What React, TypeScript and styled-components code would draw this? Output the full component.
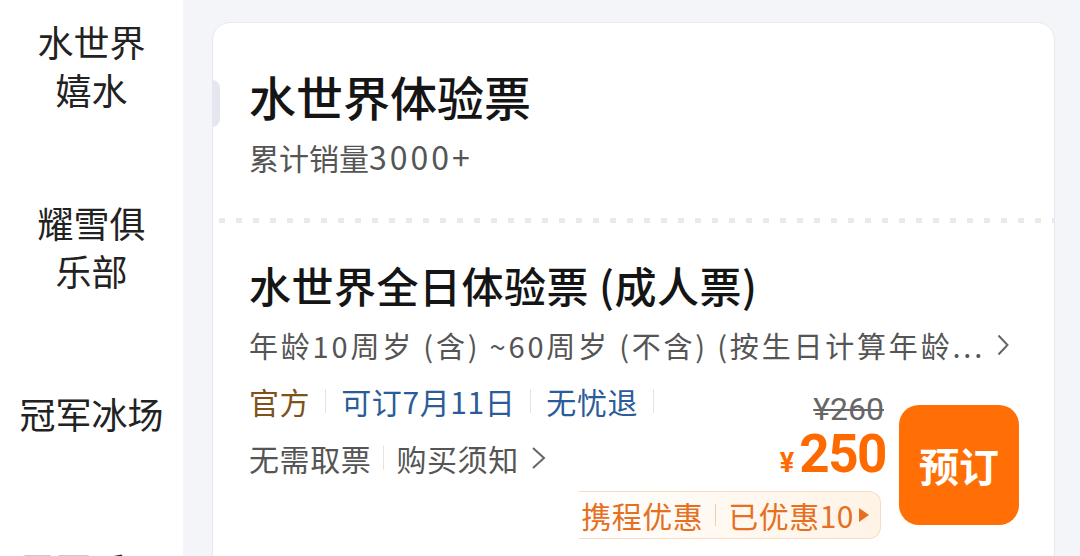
import React from 'react';
import styled, { createGlobalStyle } from 'styled-components';

const GlobalStyle = createGlobalStyle`
    html, body {
        margin: 0;
        padding: 0;
        width: 1080px;
        height: 556px;
        overflow: hidden;
        background: #f3f5f9;
    }
    * {
        box-sizing: border-box;
    }
`

const Page = styled.div`
    display: flex;
    width: 1080px;
    height: 556px;
    overflow: hidden;
    font-family: 'Noto Sans CJK SC', 'Noto Sans', sans-serif;
`

const Sidebar = styled.div`
    width: 183px;
    flex-shrink: 0;
    background-color: #ffffff;
    display: flex;
    flex-direction: column;
    align-items: center;
`

const SideItem = styled.div<{ $gap: number }>`
    margin-top: ${p => p.$gap}px;
    font-size: 36px;
    line-height: 48px;
    color: #222;
    text-align: center;
    white-space: nowrap;

    > span {
        display: block;
    }
`

const Main = styled.div`
    flex: 1;
    min-width: 0;
    padding: 22px 25px 0 29px;
    background-color: #f3f5f9;
`

const Card = styled.div`
    position: relative;
    background-color: #ffffff;
    border: 1px solid #e6e9ef;
    border-radius: 18px;
    min-height: 620px;
`

// little tab on the left edge of the card
const Notch = styled.div`
    position: absolute;
    left: -1px;
    top: 57px;
    width: 8px;
    height: 47px;
    background-color: #e4e7ef;
    border-radius: 0 8px 8px 0;
`

const HeadSection = styled.div`
    padding: 45px 36px 0 36px;
`

const ProductTitle = styled.div`
    font-size: 47px;
    line-height: 56px;
    font-weight: 500;
    color: #151515;
`

const Sales = styled.div`
    margin-top: 12px;
    font-size: 30px;
    line-height: 40px;
    color: #555;

    > b {
        font-weight: 400;
        font-size: 32px;
        letter-spacing: 3px;
    }
`

const DashLine = styled.div`
    margin-top: 41px;
    height: 5px;
    margin-left: 6px;
    background-image: repeating-linear-gradient(
        to right,
        #e9eaee 0px,
        #e9eaee 6px,
        transparent 6px,
        transparent 17px
    );
`

const TicketSection = styled.div`
    padding: 36px 35px 0 36px;
`

const TicketTitle = styled.div`
    font-size: 42px;
    line-height: 52px;
    font-weight: 500;
    color: #151515;
    letter-spacing: 0.5px;
`

const Desc = styled.div`
    margin-top: 14px;
    font-size: 29px;
    line-height: 40px;
    color: #555;
    letter-spacing: 2.8px;
    white-space: nowrap;
    display: flex;
    align-items: center;
`

const Chevron = styled.svg<{ $gap: number }>`
    margin-left: ${p => p.$gap}px;
    flex-shrink: 0;
`

const BottomRow = styled.div`
    margin-top: 16px;
    display: grid;
    align-items: start;
`

const LeftCol = styled.div`
    grid-area: 1 / 1;
    display: flex;
    flex-direction: column;
    gap: 17px;
`

const TagRow = styled.div`
    display: flex;
    align-items: center;
    font-size: 30px;
    line-height: 40px;
    white-space: nowrap;
    letter-spacing: 0.6px;
`

const Tag = styled.span<{ $tone: 'gold' | 'blue' | 'gray' }>`
    color: ${p => p.$tone === 'gold' ? '#7d531b' : p.$tone === 'blue' ? '#2b5b98' : '#555'};
`

const Sep = styled.span<{ $space: number }>`
    display: inline-block;
    width: 1px;
    height: 24px;
    background-color: #e3e3e3;
    margin: 0 ${p => p.$space}px;
`

const RightGroup = styled.div`
    grid-area: 1 / 1;
    justify-self: end;
    display: flex;
    align-items: flex-start;
    gap: 15px;
`

const PriceCol = styled.div`
    padding-top: 11px;
    display: flex;
    flex-direction: column;
    align-items: flex-end;
`

const OldPrice = styled.div`
    font-family: Roboto, 'Noto Sans', sans-serif;
    font-size: 32px;
    line-height: 34px;
    color: #666;
    text-decoration: line-through;
    text-decoration-thickness: 2px;
`

const NewPrice = styled.div`
    display: flex;
    align-items: baseline;
    color: #ff6a00;
    font-family: Roboto, 'Noto Sans', sans-serif;
    font-weight: 700;
    line-height: 56px;
    margin-right: -2px;
`

const Yen = styled.span`
    font-size: 27px;
    margin-right: 5px;
`

const Amount = styled.span`
    font-size: 53px;
    letter-spacing: -1.5px;
`

const Promo = styled.div`
    margin-top: 0;
    margin-right: 3px;
    height: 48px;
    display: flex;
    align-items: center;
    padding: 0 10px 0 2px;
    font-size: 30px;
    letter-spacing: 0.5px;
    color: #e6701f;
    white-space: nowrap;
    background: linear-gradient(to right, rgba(255, 246, 236, 0) 0%, rgba(255, 246, 236, 0.6) 40%, #fff3e6 100%);
    border: 1px solid #f6dcc2;
    border-left: none;
    border-radius: 0 12px 12px 0;
`

const PromoSep = styled.span`
    display: inline-block;
    width: 1px;
    height: 22px;
    background-color: #efcfb0;
    margin: 0 12px;
`

const BookButton = styled.button`
    margin-top: 24px;
    width: 120px;
    height: 120px;
    border: none;
    border-radius: 20px;
    background-color: #ff6f05;
    color: #ffffff;
    font-family: 'Noto Sans CJK SC', sans-serif;
    font-size: 40px;
    font-weight: 700;
    display: flex;
    align-items: center;
    justify-content: center;
    padding: 0;
`

const sideItems = [
    { lines: ['水世界', '嬉水'], gap: 17 },
    { lines: ['耀雪俱', '乐部'], gap: 85 },
    { lines: ['冠军冰场'], gap: 95 },
    { lines: ['雪圈乐园'], gap: 108 },
]

class App extends React.Component {
    render() {
        return (
            <Page>
                <GlobalStyle />
                <Sidebar>
                    {sideItems.map(item => (
                        <SideItem key={item.lines.join('')} $gap={item.gap}>
                            {item.lines.map(line => <span key={line}>{line}</span>)}
                        </SideItem>
                    ))}
                </Sidebar>
                <Main>
                    <Card>
                        <Notch />
                        <HeadSection>
                            <ProductTitle>水世界体验票</ProductTitle>
                            <Sales>累计销量<b>3000+</b></Sales>
                        </HeadSection>
                        <DashLine />
                        <TicketSection>
                            <TicketTitle>水世界全日体验票 (成人票)</TicketTitle>
                            <Desc>
                                年龄10周岁 (含) ~60周岁 (不含) (按生日计算年龄...
                                <Chevron $gap={12} width="12" height="22" viewBox="0 0 12 22">
                                    <path d="M1.5 1.5 L10.5 11 L1.5 20.5" fill="none" stroke="#666" strokeWidth="2" />
                                </Chevron>
                            </Desc>
                            <BottomRow>
                                <LeftCol>
                                    <TagRow>
                                        <Tag $tone="gold">官方</Tag>
                                        <Sep $space={15} />
                                        <Tag $tone="blue">可订7月11日</Tag>
                                        <Sep $space={15} />
                                        <Tag $tone="blue">无忧退</Tag>
                                        <Sep $space={15} />
                                    </TagRow>
                                    <TagRow>
                                        <Tag $tone="gray">无需取票</Tag>
                                        <Sep $space={12} />
                                        <Tag $tone="gray">购买须知</Tag>
                                        <Chevron $gap={12} width="16" height="24" viewBox="0 0 16 24">
                                            <path d="M2 2 L13 12 L2 22" fill="none" stroke="#666" strokeWidth="2" />
                                        </Chevron>
                                    </TagRow>
                                </LeftCol>
                                <RightGroup>
                                    <PriceCol>
                                        <OldPrice>¥260</OldPrice>
                                        <NewPrice>
                                            <Yen>¥</Yen>
                                            <Amount>250</Amount>
                                        </NewPrice>
                                        <Promo>
                                            携程优惠
                                            <PromoSep />
                                            已优惠10
                                            <svg width="12" height="16" viewBox="0 0 12 16" style={{ marginLeft: 4 }}>
                                                <path d="M1 1 L11 8 L1 15 Z" fill="#e6701f" />
                                            </svg>
                                        </Promo>
                                    </PriceCol>
                                    <BookButton>预订</BookButton>
                                </RightGroup>
                            </BottomRow>
                        </TicketSection>
                    </Card>
                </Main>
            </Page>
        )
    }
}

export default App;
